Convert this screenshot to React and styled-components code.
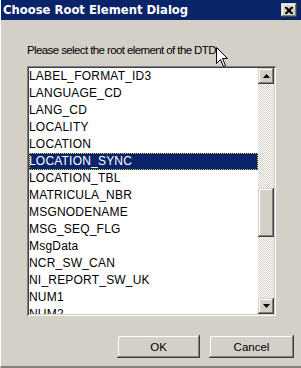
import styled, { createGlobalStyle, css } from 'styled-components';

const Global = createGlobalStyle`
  html, body {
    margin: 0;
    padding: 0;
    background: #d4d0c8;
  }
  body {
    font-family: 'Liberation Sans', Arial, sans-serif;
  }
`;

const raised = css`
  background: #d4d0c8;
  box-shadow: inset -1px -1px 0 #404040, inset 1px 1px 0 #d4d0c8,
    inset -2px -2px 0 #808080, inset 2px 2px 0 #ffffff;
`;

const Window = styled.div`
  position: relative;
  width: 301px;
  height: 368px;
  box-sizing: border-box;
  background: #d4d0c8;
  border-left: 1px solid #ffffff;
  border-bottom: 2px solid #808080;
  display: flex;
  flex-direction: column;
  overflow: hidden;
`;

const TitleBar = styled.div`
  height: 20px;
  margin-left: -1px;
  background: #0a246a;
  display: flex;
  align-items: center;
  justify-content: space-between;
  padding: 0 4px 0 3px;
`;

const Title = styled.span`
  color: #fff;
  font-family: 'DejaVu Sans', Verdana, sans-serif;
  font-weight: bold;
  font-size: 11.6px;
`;

const CloseButton = styled.div`
  ${raised};
  width: 16px;
  height: 14px;
  display: flex;
  align-items: center;
  justify-content: center;
`;

const Content = styled.div`
  flex: 1;
  display: flex;
  flex-direction: column;
  padding: 24px 0 0 26px;
`;

const Label = styled.div`
  font-size: 11.5px;
  line-height: 13px;
  letter-spacing: -0.6px;
  color: #000;
  margin-bottom: 9px;
`;

const ListBox = styled.div`
  width: 249px;
  height: 250px;
  box-sizing: border-box;
  background: #fff;
  box-shadow: inset 1px 1px 0 #808080, inset -1px -1px 0 #ffffff,
    inset 2px 2px 0 #404040, inset -2px -2px 0 #d4d0c8;
  padding: 2px;
  display: flex;
`;

const Items = styled.div`
  flex: 1;
  overflow: hidden;
`;

const Item = styled.div`
  height: 17px;
  line-height: 17px;
  font-size: 12px;
  letter-spacing: 0.2px;
  padding-left: 0;
  color: ${(p) => (p.$selected ? '#fff' : '#000')};
  background: ${(p) => (p.$selected ? '#0a246a' : 'transparent')};
  outline: ${(p) => (p.$selected ? '1px dotted #d4c850' : 'none')};
  outline-offset: -1px;
  white-space: nowrap;
`;

const ScrollBar = styled.div`
  width: 16px;
  display: flex;
  flex-direction: column;
  background: repeating-conic-gradient(#ffffff 0 25%, #d4d0c8 0 50%) 0 0 / 2px 2px;
`;

const ArrowButton = styled.div`
  ${raised};
  height: 16px;
  display: flex;
  align-items: center;
  justify-content: center;
`;

const Track = styled.div`
  height: ${(p) => p.$h}px;
`;

const Thumb = styled.div`
  ${raised};
  height: 49px;
`;

const Fill = styled.div`
  flex: 1;
`;

const ButtonRow = styled.div`
  display: flex;
  justify-content: flex-end;
  gap: 9px;
  margin-top: 19px;
  padding-right: 7px;
`;

const Button = styled.div`
  ${raised};
  width: ${(p) => p.$w}px;
  height: 23px;
  display: flex;
  align-items: center;
  justify-content: center;
  font-size: 11.5px;
  color: #000;
`;

const Cursor = styled.svg`
  position: absolute;
  left: 215px;
  top: 47px;
`;

const items = [
  'LABEL_FORMAT_ID3',
  'LANGUAGE_CD',
  'LANG_CD',
  'LOCALITY',
  'LOCATION',
  'LOCATION_SYNC',
  'LOCATION_TBL',
  'MATRICULA_NBR',
  'MSGNODENAME',
  'MSG_SEQ_FLG',
  'MsgData',
  'NCR_SW_CAN',
  'NI_REPORT_SW_UK',
  'NUM1',
  'NUM2',
];

export default function App() {
  return (
    <>
      <Global />
      <Window>
        <TitleBar>
          <Title>Choose Root Element Dialog</Title>
          <CloseButton>
            <svg width="8" height="7" viewBox="0 0 8 7">
              <path d="M0 0h2l2 2 2-2h2v1l-2.5 2.5L8 6v1H6L4 5 2 7H0V6l2.5-2.5L0 1z" fill="#000" />
            </svg>
          </CloseButton>
        </TitleBar>
        <Content>
          <Label>Please select the root element of the DTD:</Label>
          <ListBox>
            <Items>
              {items.map((name) => (
                <Item key={name} $selected={name === 'LOCATION_SYNC'}>
                  {name}
                </Item>
              ))}
            </Items>
            <ScrollBar>
              <ArrowButton>
                <svg width="7" height="4" viewBox="0 0 7 4">
                  <path d="M3.5 0L7 4H0z" fill="#000" />
                </svg>
              </ArrowButton>
              <Track $h={104} />
              <Thumb />
              <Fill />
              <ArrowButton>
                <svg width="7" height="4" viewBox="0 0 7 4">
                  <path d="M0 0h7L3.5 4z" fill="#000" />
                </svg>
              </ArrowButton>
            </ScrollBar>
          </ListBox>
          <ButtonRow>
            <Button $w={83}>OK</Button>
            <Button $w={85}>Cancel</Button>
          </ButtonRow>
        </Content>
        <Cursor width="13" height="21" viewBox="0 0 13 21">
          <path d="M0.5 0.5V16.5L4.5 12.5L7.5 19.5L9.5 18.5L6.5 11.5H11.5Z" fill="#fff" stroke="#000" strokeWidth="1" />
        </Cursor>
      </Window>
    </>
  );
}
